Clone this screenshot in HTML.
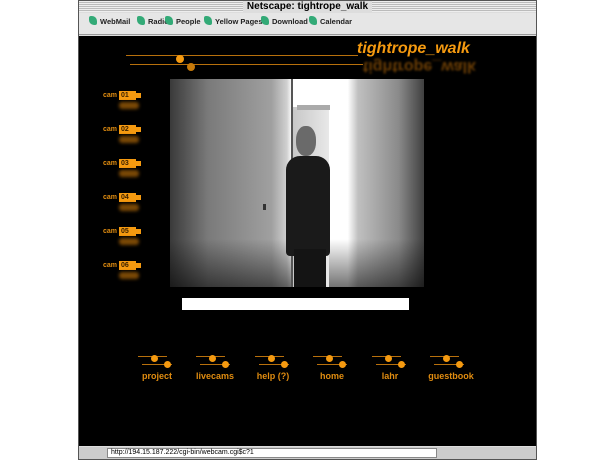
<!DOCTYPE html>
<html><head><meta charset="utf-8"><style>
*{margin:0;padding:0;box-sizing:border-box}
body{width:615px;height:460px;background:#fff;position:relative;overflow:hidden;font-family:"Liberation Sans",sans-serif}
.a{position:absolute}
.win{left:78px;top:0;width:459px;height:460px;background:#ddd;border:1px solid #555}
.title{left:0;top:0;width:457px;height:11px;background:repeating-linear-gradient(#eee 0 1px,#bbb 1px 2px);font:bold 10px "Liberation Sans",sans-serif;text-align:center;line-height:11px}
.title span{background:#ddd;padding:0 4px}
.tb{left:0;top:12px;width:457px;height:22px;background:#e6e6e6;border-bottom:1px solid #999}
.tb span{position:absolute;top:3px;font-size:7.5px;font-weight:bold;color:#222}
.tb i{display:inline-block;width:8px;height:9px;background:#3a7;border-radius:2px 5px;margin-right:3px;vertical-align:-1px}
.page{left:0;top:35px;width:457px;height:410px;background:#000}
.status{left:0;top:446px;width:457px;height:12px;background:#ccc;font-size:7px;line-height:11px}
.o{color:#f59a10}
.ln{height:1px;background:#b8700c}
.dot{width:8px;height:8px;border-radius:50%;background:#f59a10}
.cam{font-size:7px;font-weight:bold;color:#e08c10}
.badge{width:17px;height:9px;background:#f59a10;color:#3a2000;font-size:7px;font-weight:bold;line-height:9px;padding-left:2px}
.badge:after{content:"";position:absolute;left:17px;top:2px;width:5px;height:5px;background:#f59a10}
.ref{width:20px;height:7px;background:#7a4805;filter:blur(1.5px);border-radius:3px}
.nav{font-size:9px;font-weight:bold;color:#e08c10;text-align:center;width:70px}
</style></head><body>
<div class="a win">
 <div class="a title"><span>Netscape: tightrope_walk</span></div>
 <div class="a tb">
  <span style="left:10px"><i></i>WebMail</span>
  <span style="left:58px"><i></i>Radio</span>
  <span style="left:86px"><i></i>People</span>
  <span style="left:125px"><i></i>Yellow Pages</span>
  <span style="left:182px"><i></i>Download</span>
  <span style="left:230px"><i></i>Calendar</span>
 </div>
 <div class="a page"></div>
 <div class="a status"><div class="a" style="left:28px;top:1px;width:330px;height:10px;border:1px solid #888;background:#fff"></div><span class="a" style="left:32px;top:0">http://194.15.187.222/cgi-bin/webcam.cgi$c?1</span></div>
</div>
<!-- header -->
<div class="a ln" style="left:126px;top:55px;width:232px"></div>
<div class="a ln" style="left:130px;top:64px;width:233px"></div>
<div class="a dot" style="left:176px;top:55px"></div>
<div class="a dot" style="left:187px;top:63px;background:#c77a0a"></div>
<div class="a o" style="left:357px;top:40px;font-size:16px;font-style:italic;font-weight:bold">tightrope_walk</div>
<div class="a" style="left:363px;top:57px;font-size:16px;font-weight:bold;color:#6a3d05;transform:scaleY(-1);filter:blur(1px)">tightrope_walk</div>
<!-- cams -->
<div class="a" style="left:103px;top:92px">
 <div class="a cam" style="left:0;top:0">cam</div><div class="a badge" style="left:16px;top:-1px">01</div><div class="a ref" style="left:16px;top:10px"></div>
 <div class="a cam" style="left:0;top:34px">cam</div><div class="a badge" style="left:16px;top:33px">02</div><div class="a ref" style="left:16px;top:44px"></div>
 <div class="a cam" style="left:0;top:68px">cam</div><div class="a badge" style="left:16px;top:67px">03</div><div class="a ref" style="left:16px;top:78px"></div>
 <div class="a cam" style="left:0;top:102px">cam</div><div class="a badge" style="left:16px;top:101px">04</div><div class="a ref" style="left:16px;top:112px"></div>
 <div class="a cam" style="left:0;top:136px">cam</div><div class="a badge" style="left:16px;top:135px">05</div><div class="a ref" style="left:16px;top:146px"></div>
 <div class="a cam" style="left:0;top:170px">cam</div><div class="a badge" style="left:16px;top:169px">06</div><div class="a ref" style="left:16px;top:180px"></div>
</div>
<!-- photo -->
<div class="a" style="left:170px;top:79px;width:254px;height:208px;background:linear-gradient(90deg,#3a3a3a 0%,#7a7a7a 15%,#a0a0a0 40%,#d0d0d0 46%,#fff 48%,#fff 70%,#c0c0c0 74%,#8a8a8a 90%,#404040 100%);overflow:hidden">
 <div class="a" style="left:0;top:160px;width:254px;height:48px;background:linear-gradient(transparent,rgba(0,0,0,.55))"></div>
 <div class="a" style="left:121px;top:0;width:2px;height:208px;background:#555"></div>
 <div class="a" style="left:123px;top:28px;width:36px;height:180px;background:linear-gradient(90deg,#c8c8c8,#e8e8e8)"></div>
 <div class="a" style="left:127px;top:26px;width:33px;height:5px;background:#aaa"></div>
 <div class="a" style="left:93px;top:125px;width:3px;height:6px;background:#333"></div>
 <div class="a" style="left:126px;top:47px;width:20px;height:30px;border-radius:45%;background:#6a6a6a"></div>
 <div class="a" style="left:116px;top:77px;width:44px;height:100px;border-radius:14px 14px 4px 4px;background:#1a1a1a"></div>
 <div class="a" style="left:124px;top:170px;width:32px;height:40px;background:#141414"></div>
</div>
<div class="a" style="left:182px;top:298px;width:227px;height:12px;background:#fff"></div>
<!-- nav -->
<div class="a" style="left:0;top:0">
 <div class="a" style="left:138px;top:356px"><div class="a ln" style="left:0;top:0;width:29px"></div><div class="a ln" style="left:4px;top:8px;width:30px"></div><div class="a dot" style="left:13px;top:-1px;width:7px;height:7px"></div><div class="a dot" style="left:26px;top:5px;width:7px;height:7px"></div></div>
 <div class="a" style="left:196px;top:356px"><div class="a ln" style="left:0;top:0;width:29px"></div><div class="a ln" style="left:4px;top:8px;width:30px"></div><div class="a dot" style="left:13px;top:-1px;width:7px;height:7px"></div><div class="a dot" style="left:26px;top:5px;width:7px;height:7px"></div></div>
 <div class="a" style="left:255px;top:356px"><div class="a ln" style="left:0;top:0;width:29px"></div><div class="a ln" style="left:4px;top:8px;width:30px"></div><div class="a dot" style="left:13px;top:-1px;width:7px;height:7px"></div><div class="a dot" style="left:26px;top:5px;width:7px;height:7px"></div></div>
 <div class="a" style="left:313px;top:356px"><div class="a ln" style="left:0;top:0;width:29px"></div><div class="a ln" style="left:4px;top:8px;width:30px"></div><div class="a dot" style="left:13px;top:-1px;width:7px;height:7px"></div><div class="a dot" style="left:26px;top:5px;width:7px;height:7px"></div></div>
 <div class="a" style="left:372px;top:356px"><div class="a ln" style="left:0;top:0;width:29px"></div><div class="a ln" style="left:4px;top:8px;width:30px"></div><div class="a dot" style="left:13px;top:-1px;width:7px;height:7px"></div><div class="a dot" style="left:26px;top:5px;width:7px;height:7px"></div></div>
 <div class="a" style="left:430px;top:356px"><div class="a ln" style="left:0;top:0;width:29px"></div><div class="a ln" style="left:4px;top:8px;width:30px"></div><div class="a dot" style="left:13px;top:-1px;width:7px;height:7px"></div><div class="a dot" style="left:26px;top:5px;width:7px;height:7px"></div></div>
 <div class="a nav" style="left:122px;top:371px">project</div>
 <div class="a nav" style="left:180px;top:371px">livecams</div>
 <div class="a nav" style="left:238px;top:371px">help (?)</div>
 <div class="a nav" style="left:297px;top:371px">home</div>
 <div class="a nav" style="left:355px;top:371px">lahr</div>
 <div class="a nav" style="left:416px;top:371px">guestbook</div>
</div>
</body></html>
